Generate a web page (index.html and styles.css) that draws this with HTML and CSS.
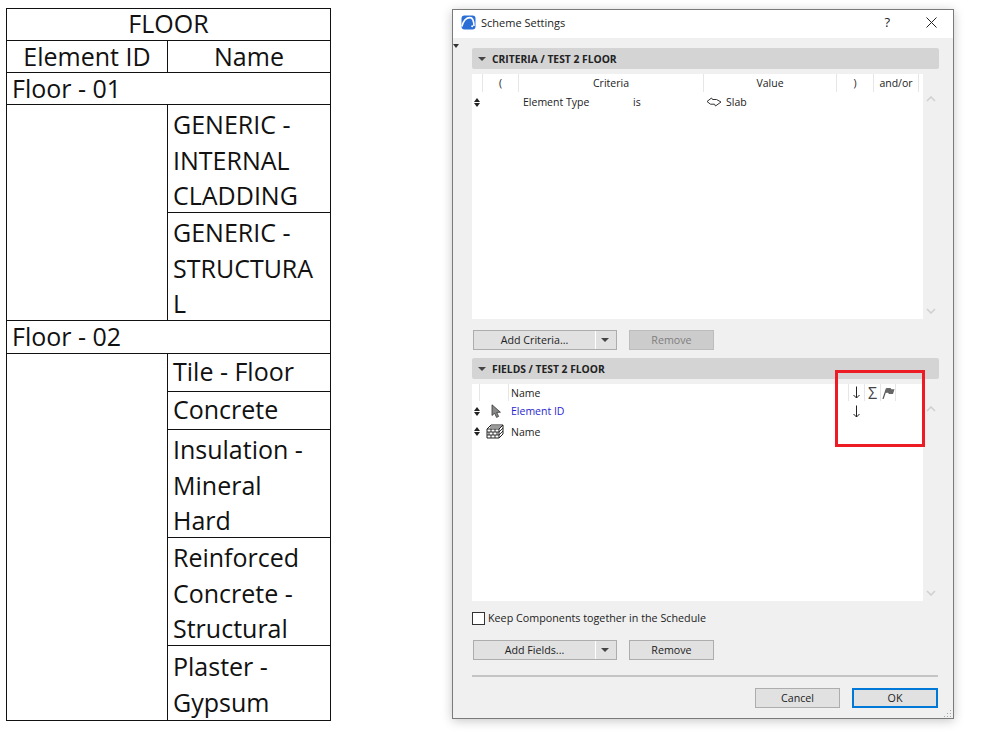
FILE: index.html
```html
<!DOCTYPE html>
<html lang="en">
<head>
<meta charset="utf-8">
<title>Scheme Settings</title>
<link rel="stylesheet" href="styles.css">
</head>
<body>
<main class="page">
  <table class="schedule">
    <colgroup><col class="col-a"><col class="col-b"></colgroup>
    <tr class="row-head row-title"><th colspan="2">FLOOR</th></tr>
    <tr class="row-head"><th>Element ID</th><th>Name</th></tr>
    <tr class="row-head"><td colspan="2">Floor - 01</td></tr>
    <tr class="row-3"><td rowspan="2"></td><td><div class="lines">GENERIC -<br>INTERNAL<br>CLADDING</div></td></tr>
    <tr class="row-3"><td><div class="lines">GENERIC -<br>STRUCTURA<br>L</div></td></tr>
    <tr class="row-head row-33"><td colspan="2">Floor - 02</td></tr>
    <tr class="row-1"><td rowspan="5"></td><td>Tile - Floor</td></tr>
    <tr class="row-1"><td>Concrete</td></tr>
    <tr class="row-3"><td><div class="lines">Insulation -<br>Mineral<br>Hard</div></td></tr>
    <tr class="row-3"><td><div class="lines">Reinforced<br>Concrete -<br>Structural</div></td></tr>
    <tr class="row-2"><td><div class="lines">Plaster -<br>Gypsum</div></td></tr>
  </table>

  <section class="dialog">
    <header class="titlebar">
      <svg class="app-icon" viewBox="0 0 15 15" aria-hidden="true">
        <rect x="0.5" y="0.5" width="14" height="14" rx="3" fill="#2b6fd6"/>
        <path d="M0.8 11.5 C2.5 5 6 2.6 9 2.6 C11.6 2.6 12.8 5.6 13 11" fill="none" stroke="#fff" stroke-width="1.6"/>
        <circle cx="11.2" cy="11.2" r="1" fill="#fff"/>
      </svg>
      <span class="title">Scheme Settings</span>
      <span class="help">?</span>
      <svg class="close" viewBox="0 0 11 11" aria-hidden="true"><path d="M0.5 0.5 L10.5 10.5 M10.5 0.5 L0.5 10.5" stroke="#222" stroke-width="1" fill="none"/></svg>
    </header>

    <div class="content">
      <span class="marker"></span>

      <h2 class="section"><span class="tri"></span>CRITERIA / TEST 2 FLOOR</h2>
      <div class="list-wrap">
        <div class="list list-1">
          <div class="list-head head-1">
            <span class="hc hc-a"></span>
            <span class="hc hc-b">(</span>
            <span class="hc hc-c">Criteria</span>
            <span class="hc hc-d">Value</span>
            <span class="hc hc-e">)</span>
            <span class="hc hc-f">and/or</span>
          </div>
          <div class="crit-row">
            <span class="handle"></span>
            <span>Element Type</span>
            <span>is</span>
            <span class="slab">
              <svg class="slab-icon" viewBox="0 0 16 10" aria-hidden="true"><path d="M1 4.5 L5.5 1 L6.5 2.5 L10.5 2.5 L15 5 L9.5 9 L8.5 7.2 L4.5 7.2 Z" fill="#fff" stroke="#333" stroke-width="1"/></svg>
              Slab
            </span>
          </div>
        </div>
        <div class="scroll">
          <svg class="chev" viewBox="0 0 10 6" aria-hidden="true"><path d="M1 5 L5 1 L9 5" fill="none" stroke="#d0d0d0" stroke-width="1.6"/></svg>
          <svg class="chev" viewBox="0 0 10 6" aria-hidden="true"><path d="M1 1 L5 5 L9 1" fill="none" stroke="#d0d0d0" stroke-width="1.6"/></svg>
        </div>
      </div>
      <div class="buttons buttons-1">
        <button class="btn btn-split" type="button"><span class="btn-label">Add Criteria...</span><span class="btn-caret"></span></button>
        <button class="btn btn-off" type="button">Remove</button>
      </div>

      <h2 class="section section-2"><span class="tri"></span>FIELDS / TEST 2 FLOOR</h2>
      <div class="list-wrap">
        <div class="list list-2">
          <div class="list-head head-2">
            <span class="hf hf-a"></span>
            <span class="hf hf-b"></span>
            <span class="hf hf-c">Name</span>
            <span class="hf hf-d">
              <svg class="down" viewBox="0 0 9 13" aria-hidden="true"><path d="M4.5 0.5 V12 M1.5 9 L4.5 12 L7.5 9" fill="none" stroke="#222" stroke-width="1"/></svg>
            </span>
            <span class="hf hf-d sigma">Σ</span>
            <span class="hf hf-d hf-last">
              <svg class="flag" viewBox="0 0 13 12" aria-hidden="true"><path d="M1 12 L4.5 1.5" stroke="#555" stroke-width="1.2" fill="none"/><path d="M4.5 1 L8.5 1 L9.5 2.2 L12.5 2.2 L11 7 L7 7 L6 5.8 L3 6 Z" fill="#666"/></svg>
            </span>
          </div>
          <div class="field-row">
            <span class="handle"></span>
            <svg class="pointer" viewBox="0 0 10 14" aria-hidden="true"><path d="M1 0.8 L1 11.5 L3.6 9.2 L5.6 13.4 L7.6 12.4 L5.7 8.4 L9.4 8.2 Z" fill="#8a8a8a" stroke="#333" stroke-width="0.8"/></svg>
            <span class="blue">Element ID</span>
            <svg class="down" viewBox="0 0 9 13" aria-hidden="true"><path d="M4.5 0.5 V12 M1.5 9 L4.5 12 L7.5 9" fill="none" stroke="#222" stroke-width="1"/></svg>
          </div>
          <div class="field-row">
            <span class="handle"></span>
            <svg class="wall" viewBox="0 0 18 15" aria-hidden="true">
              <path d="M1 5 L5 1 L17 1 L17 10 L13 14 L1 14 Z M1 5 L13 5 L17 1 M13 5 V14" fill="#fff" stroke="#222" stroke-width="1"/>
              <path d="M1 8 H13 M1 11 H13 M5 5 V8 M9 5 V8 M3 8 V11 M7 8 V11 M11 8 V11 M5 11 V14 M9 11 V14 M4 3 H15 M13 8 L17 4 M13 11 L17 7" fill="none" stroke="#222" stroke-width="0.9"/>
            </svg>
            <span>Name</span>
          </div>
        </div>
        <div class="scroll">
          <svg class="chev" viewBox="0 0 10 6" aria-hidden="true"><path d="M1 5 L5 1 L9 5" fill="none" stroke="#d0d0d0" stroke-width="1.6"/></svg>
          <svg class="chev" viewBox="0 0 10 6" aria-hidden="true"><path d="M1 1 L5 5 L9 1" fill="none" stroke="#d0d0d0" stroke-width="1.6"/></svg>
        </div>
      </div>

      <label class="keep"><span class="checkbox"></span><span class="keep-text">Keep Components together in the Schedule</span></label>

      <div class="buttons buttons-2">
        <button class="btn btn-split" type="button"><span class="btn-label">Add Fields...</span><span class="btn-caret"></span></button>
        <button class="btn" type="button">Remove</button>
      </div>

      <hr class="rule">

      <footer class="footer">
        <button class="btn" type="button">Cancel</button>
        <button class="btn btn-primary" type="button">OK</button>
      </footer>
      <svg class="grip" viewBox="0 0 9 9" aria-hidden="true"><path d="M7 1h1v1H7z M4 4h1v1H4z M7 4h1v1H7z M1 7h1v1H1z M4 7h1v1H4z M7 7h1v1H7z" fill="#a5a5a5"/></svg>
    </div>

    <div class="annotation"></div>
  </section>
</main>
</body>
</html>
```

FILE: styles.css
```css
* { box-sizing: border-box; }
html, body { margin: 0; padding: 0; background: #fff; }
body { width: 998px; height: 735px; overflow: hidden; }

.page {
  display: flex;
  align-items: flex-start;
  padding: 8px 0 0 6px;
  gap: 121px;
}

/* schedule table */
.schedule {
  width: 324px;
  table-layout: fixed;
  border-collapse: collapse;
  font-family: "Open Sans", "Noto Sans", sans-serif;
  font-size: 25px;
  color: #111;
  flex: none;
}
.col-a { width: 161px; }
.col-b { width: 163px; }
.schedule th, .schedule td {
  border: 1px solid #111;
  padding: 0 5px;
  font-weight: 400;
  line-height: 35.6px;
  vertical-align: middle;
}
.schedule th { text-align: center; }
.lines { padding-top: 2px; margin-bottom: -2px; }
.schedule .row-head th, .schedule .row-head td { height: 32px; line-height: 26px; padding-bottom: 2px; }
.schedule .row-title th { padding-bottom: 4px; }
.schedule .row-33 td { height: 33px; }
.schedule .row-1 td { height: 38px; line-height: 30px; padding-bottom: 3px; }
.row-2 td { height: 75px; }
.row-3 td { height: 108px; }

/* dialog */
.dialog {
  position: relative;
  flex: none;
  width: 502px;
  height: 710px;
  margin-top: 1px;
  border: 1px solid #7a7a7a;
  background: #f0f0f0;
  box-shadow: 0 2px 10px rgba(0, 0, 0, 0.22);
  font-family: "Open Sans", "Noto Sans", sans-serif;
  font-size: 10.5px;
  color: #222;
}
.titlebar {
  display: flex;
  align-items: center;
  height: 28px;
  padding: 0 0 4px 8px;
  background: #fff;
}
.app-icon { width: 15px; height: 15px; flex: none; }
.title { margin-left: 5px; font-size: 11px; color: #222; }
.help { margin-left: auto; font-size: 13px; margin-right: 36px; }
.close { width: 11px; height: 11px; margin-right: 16px; flex: none; }

.content {
  position: relative;
  height: 680px;
  padding: 10px 14px 0 19px;
}
.marker {
  position: absolute;
  left: 0;
  top: 6px;
  border: 3px solid transparent;
  border-top: 4px solid #333;
  border-bottom: 0;
}
.section {
  display: flex;
  align-items: center;
  height: 21px;
  margin: 0;
  padding-left: 6px;
  background: #d4d4d4;
  border-radius: 2px;
  font-size: 10.3px;
  font-weight: 700;
  color: #222;
}
.section-2 { margin-top: 8px; }
.tri {
  width: 0;
  height: 0;
  margin-right: 6px;
  border-left: 4px solid transparent;
  border-right: 4px solid transparent;
  border-top: 4px solid #444;
}
.list-wrap { display: flex; margin-top: 5px; }
.list { width: 451px; background: #fff; }
.list-1 { height: 245px; }
.list-2 { height: 217px; }
.scroll {
  flex: none;
  width: 16px;
  display: flex;
  flex-direction: column;
  justify-content: space-between;
  align-items: center;
  padding: 22px 0 5px;
}
.chev { width: 10px; height: 6px; }

.list-head { display: flex; height: 18px; align-items: stretch; }
.hc, .hf {
  display: flex;
  align-items: center;
  justify-content: center;
  border-left: 1px solid #e6e6e6;
}
.hc-a { width: 10px; border-left: 0; }
.hc-b { width: 36px; }
.hc-c { width: 185px; }
.hc-d { width: 133px; }
.hc-e { width: 37px; }
.hc-f { width: 46px; border-right: 1px solid #e6e6e6; }
.head-1 { background: #f0f0f0; width: 447px; }
.head-1 .hc { background: #fff; }
.head-2 { height: 17px; }
.hf-a { width: 7px; border-left: 0; }
.hf-b { width: 29px; }
.hf-c { width: 340px; justify-content: flex-start; padding-left: 2px; }
.hf-d { width: 16px; }
.hf-last { border-right: 1px solid #e6e6e6; }
.sigma { font-size: 16px; line-height: 1; color: #444; }

.handle {
  position: relative;
  display: block;
  justify-self: start;
  width: 7px;
  height: 9px;
  margin-left: 2px;
}
.handle::before, .handle::after {
  content: "";
  position: absolute;
  left: 0;
  border-left: 3px solid transparent;
  border-right: 3px solid transparent;
}
.handle::before { top: 0; border-bottom: 4px solid #222; }
.handle::after { bottom: 0; border-top: 4px solid #222; }

.crit-row {
  display: grid;
  grid-template-columns: 51px 110px 73px 1fr;
  align-items: center;
  height: 20px;
}
.slab { display: flex; align-items: center; gap: 4px; }
.slab-icon { width: 16px; height: 10px; }

.field-row {
  display: grid;
  grid-template-columns: 14px 25px 337px 16px;
  align-items: center;
  height: 20.5px;
}
.blue { color: #2a1fd0; }
.pointer { width: 10px; height: 14px; margin-left: 5px; }
.wall { width: 18px; height: 15px; }
.down { width: 9px; height: 13px; justify-self: center; }
.flag { width: 13px; height: 12px; }

.buttons { display: flex; gap: 12px; margin-left: 1px; }
.buttons-1 { margin-top: 11px; }
.buttons-2 { margin-top: 15px; }

.btn {
  display: block;
  width: 85px;
  height: 20px;
  padding: 0;
  border: 1px solid #adadad;
  background: #e1e1e1;
  font-family: inherit;
  font-size: 10.7px;
  color: #222;
  text-align: center;
}
.btn-split {
  display: flex;
  align-items: stretch;
  width: 144px;
}
.btn-label {
  display: flex;
  align-items: center;
  justify-content: center;
  width: 122px;
  border-right: 1px solid #fff;
}
.btn-caret {
  align-self: center;
  width: 0;
  height: 0;
  margin-left: 5px;
  border-left: 4px solid transparent;
  border-right: 4px solid transparent;
  border-top: 4px solid #444;
}
.btn-off { background: #cccccc; color: #808080; border-color: #bdbdbd; }
.btn-primary { border: 2px solid #0078d7; width: 86px; }

.keep {
  display: flex;
  align-items: center;
  gap: 3px;
  height: 13px;
  margin-top: 11px;
  font-size: 10.75px;
}
.keep-text { margin-bottom: 2px; }
.checkbox {
  width: 13px;
  height: 13px;
  border: 1px solid #333;
  background: #fff;
}
.rule {
  height: 2px;
  margin: 15px 1px 0 0;
  border: 0;
  background: #c4c4c4;
}
.footer {
  display: flex;
  justify-content: flex-end;
  gap: 12px;
  margin-top: 11px;
  padding-right: 1px;
}
.grip {
  position: absolute;
  right: 1px;
  bottom: 0;
  width: 9px;
  height: 9px;
}

/* red callout drawn over the dialog */
.annotation {
  position: absolute;
  left: 382px;
  top: 360px;
  width: 90px;
  height: 77px;
  border: 3px solid #ed1c24;
}
```
